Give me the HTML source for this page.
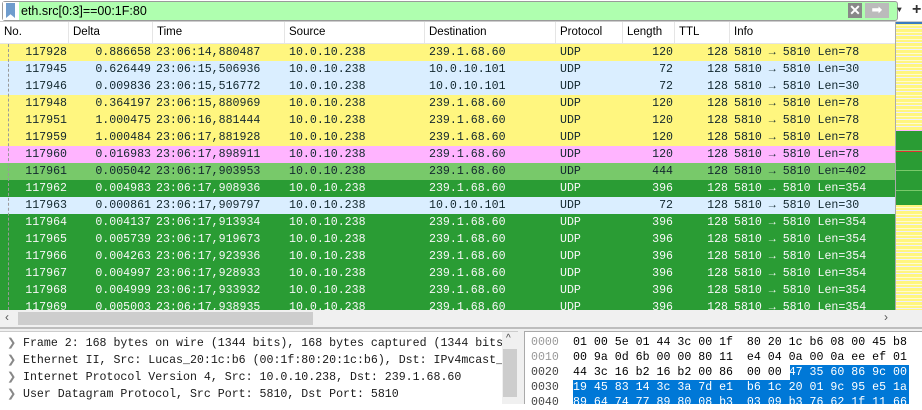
<!DOCTYPE html>
<html><head><meta charset="utf-8"><style>
*{margin:0;padding:0;box-sizing:border-box}
body{width:922px;height:404px;overflow:hidden;background:#fff;position:relative;font-family:"Liberation Mono",monospace;font-size:11.6px}
.abs{position:absolute}
.sans{font-family:"Liberation Sans",sans-serif}
#hdr div{position:absolute;top:22px;height:21px;line-height:21px;font-family:"Liberation Sans",sans-serif;font-size:11.5px;color:#000;padding-left:4px;border-right:1px solid #e5e5e5}
.row{position:absolute;left:0;width:895px;height:17px;line-height:17px;white-space:pre}
.row span{position:absolute;top:0}
.r{text-align:right}
.y{background:#fff67f;color:#12272e}
.b{background:#daeeff;color:#12272e}
.p{background:#ffb4ff;color:#12272e}
.lg{background:#78c96a;color:#12272e}
.g{background:#2a9c34;color:#f7f7f7}
.dl{position:absolute;left:23px;height:17px;line-height:17px;white-space:pre;color:#1a1a1a}
.ch{position:absolute;left:7px;color:#888;font-family:"Liberation Sans",sans-serif;font-size:11px}
.hx{position:absolute;height:15px;line-height:15px;white-space:pre;color:#000}
.off{position:absolute;left:531px;height:15px;line-height:15px;color:#999}
</style></head><body>
<!-- filter bar -->
<div class="abs" style="left:2px;top:1px;width:896px;height:20px;border:1px solid #9a9a9a;border-radius:3px;background:#afffaf"></div>
<div class="abs" style="left:3px;top:2px;width:16px;height:18px;background:#fff"></div>
<div class="abs" style="left:6px;top:3px;width:9px;height:15px;background:#6f9ccd;clip-path:polygon(0 0,100% 0,100% 100%,50% 75%,0 100%)"></div>
<div class="abs sans" style="left:21px;top:3px;font-size:12.5px;line-height:16px;color:#000">eth.src[0:3]==00:1F:80</div>
<div class="abs" style="left:848px;top:3px;width:14px;height:15px;background:#888;color:#fff;font:bold 14px 'Liberation Sans',sans-serif;text-align:center;line-height:15px">✕</div>
<div class="abs" style="left:865px;top:3px;width:24px;height:15px;background:#bbb;color:#fff;font:bold 13px 'DejaVu Sans',sans-serif;text-align:center;line-height:15px">➡</div>
<div class="abs" style="left:897px;top:6px;font-size:8px;color:#333">▼</div>
<div class="abs sans" style="left:912px;top:1px;font-size:16px;font-weight:bold;color:#333">+</div>
<div class="abs" style="left:0;top:21px;width:922px;height:1px;background:#ccc"></div>
<!-- header -->
<div id="hdr">
<div style="left:0;width:69px">No.</div>
<div style="left:69px;width:84px">Delta</div>
<div style="left:153px;width:132px">Time</div>
<div style="left:285px;width:140px">Source</div>
<div style="left:425px;width:131px">Destination</div>
<div style="left:556px;width:67px">Protocol</div>
<div style="left:623px;width:52px">Length</div>
<div style="left:675px;width:55px">TTL</div>
<div style="left:730px;width:165px;border:none">Info</div>
</div>
<div class="abs" style="left:0;top:43px;width:895px;height:1px;background:#e5e5e5"></div>
<!-- rows -->
<div class="abs" style="left:0;top:44px;width:895px;height:266px;overflow:hidden">
<div id="rows"></div>
</div>
<div class="abs" style="left:8px;top:44px;width:1px;height:266px;border-left:1px dashed #999"></div>
<!-- minimap -->
<div class="abs" style="left:895px;top:22px;width:1px;height:288px;background:#aaa"></div>
<div class="abs" style="left:896px;top:22px;width:26px;height:288px;background:repeating-linear-gradient(#fff67f 0 3px,#fffbd0 3px 4px,#fff67f 4px 6px,#eef 6px 7px)"></div>
<div class="abs" style="left:896px;top:22px;width:26px;height:2px;background:#3a7bbf"></div>
<div class="abs" style="left:896px;top:130px;width:26px;height:1px;background:#ffb4ff"></div>
<div class="abs" style="left:896px;top:131px;width:26px;height:74px;background:#2a9c34"></div>
<div class="abs" style="left:896px;top:151px;width:26px;height:1px;background:#e03030"></div>
<div class="abs" style="left:896px;top:150px;width:26px;height:1px;background:#78c96a"></div>
<div class="abs" style="left:896px;top:170px;width:26px;height:1px;background:#78c96a"></div>
<div class="abs" style="left:896px;top:190px;width:26px;height:1px;background:#78c96a"></div>
<!-- h scrollbar -->
<div class="abs" style="left:0;top:310px;width:922px;height:17px;background:#f0f0f0"></div>
<div class="abs" style="left:18px;top:312px;width:295px;height:13px;background:#cdcdcd"></div>
<div class="abs sans" style="left:5px;top:310px;font-size:12px;color:#555">‹</div>
<div class="abs sans" style="left:884px;top:310px;font-size:12px;color:#555">›</div>
<div class="abs" style="left:0;top:327px;width:922px;height:2px;background:#bdbdbd"></div>
<div class="abs" style="left:0;top:329px;width:922px;height:75px;background:#f0f0f0"></div>
<!-- details -->
<div class="abs" style="left:0;top:331px;width:518px;height:73px;background:#fff;border-top:1px solid #ccc;overflow:hidden">
<div style="position:absolute;left:0;top:0;width:502px;height:73px;overflow:hidden">
<div class="ch" style="top:4px">❯</div><div class="dl" style="top:3px">Frame 2: 168 bytes on wire (1344 bits), 168 bytes captured (1344 bits)</div>
<div class="ch" style="top:21px">❯</div><div class="dl" style="top:20px">Ethernet II, Src: Lucas_20:1c:b6 (00:1f:80:20:1c:b6), Dst: IPv4mcast_01</div>
<div class="ch" style="top:38px">❯</div><div class="dl" style="top:37px">Internet Protocol Version 4, Src: 10.0.10.238, Dst: 239.1.68.60</div>
<div class="ch" style="top:55px">❯</div><div class="dl" style="top:54px">User Datagram Protocol, Src Port: 5810, Dst Port: 5810</div>
</div>
<div style="position:absolute;left:502px;top:0;width:16px;height:73px;background:#f0f0f0"></div>
<div style="position:absolute;left:503px;top:17px;width:14px;height:48px;background:#cdcdcd"></div>
<div class="sans" style="position:absolute;left:506px;top:1px;font-size:10px;color:#444">^</div>
</div>
<!-- hex -->
<div class="abs" style="left:524px;top:331px;width:398px;height:73px;background:#fff;border-left:1px solid #aaa;border-top:1px solid #aaa;overflow:hidden"></div>
<div class="abs" style="left:790px;top:365px;width:119px;height:15px;background:#0078d7"></div>
<div class="abs" style="left:573px;top:380px;width:336px;height:24px;background:#0078d7"></div>
<div class="off" style="top:335px">0000</div>
<div class="off" style="top:350px">0010</div>
<div class="off" style="top:365px;color:#444">0020</div>
<div class="off" style="top:380px;color:#444">0030</div>
<div class="off" style="top:395px;color:#444">0040</div>
<div class="hx" style="left:573px;top:335px">01 00 5e 01 44 3c 00 1f  80 20 1c b6 08 00 45 b8</div>
<div class="hx" style="left:573px;top:350px">00 9a 0d 6b 00 00 80 11  e4 04 0a 00 0a ee ef 01</div>
<div class="hx" style="left:573px;top:365px">44 3c 16 b2 16 b2 00 86  00 00 <span style="color:#fff">47 35 60 86 9c 00</span></div>
<div class="hx" style="left:573px;top:380px;color:#fff">19 45 83 14 3c 3a 7d e1  b6 1c 20 01 9c 95 e5 1a</div>
<div class="hx" style="left:573px;top:395px;color:#fff">89 64 74 77 89 80 08 b3  03 09 b3 76 62 1f 11 66</div>
<script>
var d=[
["y","117928","0.886658","23:06:14,880487","239.1.68.60","120","78"],
["b","117945","0.626449","23:06:15,506936","10.0.10.101","72","30"],
["b","117946","0.009836","23:06:15,516772","10.0.10.101","72","30"],
["y","117948","0.364197","23:06:15,880969","239.1.68.60","120","78"],
["y","117951","1.000475","23:06:16,881444","239.1.68.60","120","78"],
["y","117959","1.000484","23:06:17,881928","239.1.68.60","120","78"],
["p","117960","0.016983","23:06:17,898911","239.1.68.60","120","78"],
["lg","117961","0.005042","23:06:17,903953","239.1.68.60","444","402"],
["g","117962","0.004983","23:06:17,908936","239.1.68.60","396","354"],
["b","117963","0.000861","23:06:17,909797","10.0.10.101","72","30"],
["g","117964","0.004137","23:06:17,913934","239.1.68.60","396","354"],
["g","117965","0.005739","23:06:17,919673","239.1.68.60","396","354"],
["g","117966","0.004263","23:06:17,923936","239.1.68.60","396","354"],
["g","117967","0.004997","23:06:17,928933","239.1.68.60","396","354"],
["g","117968","0.004999","23:06:17,933932","239.1.68.60","396","354"],
["g","117969","0.005003","23:06:17,938935","239.1.68.60","396","354"]];
var h="";
d.forEach(function(r,i){
h+='<div class="row '+r[0]+'" style="top:'+(i*17)+'px">'+
'<span class="r" style="left:0;width:67px">'+r[1]+'</span>'+
'<span class="r" style="left:69px;width:82px">'+r[2]+'</span>'+
'<span style="left:156px">'+r[3]+'</span>'+
'<span style="left:289px">10.0.10.238</span>'+
'<span style="left:429px">'+r[4]+'</span>'+
'<span style="left:560px">UDP</span>'+
'<span class="r" style="left:623px;width:50px">'+r[5]+'</span>'+
'<span class="r" style="left:675px;width:53px">128</span>'+
'<span style="left:734px">5810 → 5810 Len='+r[6]+'</span></div>';
});
document.getElementById("rows").innerHTML=h;
</script>
</body></html>
